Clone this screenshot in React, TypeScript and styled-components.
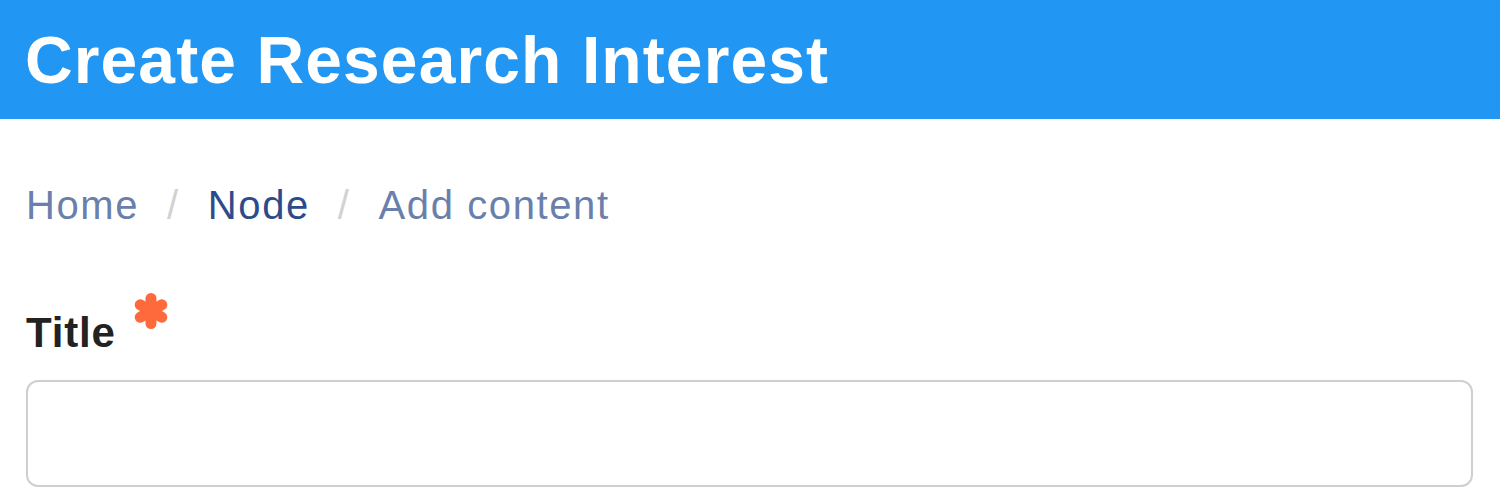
import React from 'react';
import styled, { createGlobalStyle } from 'styled-components';

const GlobalStyle = createGlobalStyle`
  html, body {
    margin: 0;
    padding: 0;
    background: #ffffff;
    font-family: 'Liberation Sans', Arial, sans-serif;
  }
`;

const Page = styled.div`
  width: 1500px;
  height: 500px;
  overflow: hidden;
  background: #fff;
`;

const Header = styled.header`
  height: 119px;
  background: #2196f3;
  display: flex;
  align-items: center;
  padding: 0 25px;
  box-sizing: border-box;
`;

const PageTitle = styled.h1`
  margin: 0;
  color: #fff;
  font-size: 66px;
  font-weight: 700;
  letter-spacing: 1.1px;
`;

const Content = styled.main`
  padding: 60px 27px 0 26px;
`;

const Breadcrumb = styled.nav`
  display: flex;
  align-items: center;
  gap: 28px;
  font-size: 40px;
  letter-spacing: 1.6px;
  height: 52px;
`;

const Crumb = styled.span<{ $active?: boolean }>`
  color: ${({ $active }) => ($active ? '#2d4b8b' : '#6a7fab')};
`;

const Sep = styled.span`
  color: #d2d2d2;
`;

const Field = styled.div`
  margin-top: 78px;
`;

const Label = styled.label`
  display: flex;
  align-items: flex-start;
  font-size: 42px;
  font-weight: 700;
  letter-spacing: 0.8px;
  color: #222;
`;

const Required = styled.svg`
  width: 38px;
  height: 38px;
  margin-left: 16px;
  margin-top: -17px;
`;

const Input = styled.input`
  display: block;
  margin-top: 23px;
  width: 1447px;
  height: 107px;
  box-sizing: border-box;
  border: 2px solid #cfcfcf;
  border-radius: 12px;
  background: #fff;
  outline: none;
  font-size: 36px;
`;

const RequiredMark = () => (
  <Required viewBox="0 0 38 38" aria-label="required">
    <g stroke="#ff6a3c" strokeWidth="11" strokeLinecap="round">
      <line x1="19" y1="6.5" x2="19" y2="31.5" />
      <line x1="8.2" y1="12.75" x2="29.8" y2="25.25" />
      <line x1="8.2" y1="25.25" x2="29.8" y2="12.75" />
    </g>
  </Required>
);

export default function App() {
  return (
    <Page>
      <GlobalStyle />
      <Header>
        <PageTitle>Create Research Interest</PageTitle>
      </Header>
      <Content>
        <Breadcrumb>
          <Crumb>Home</Crumb>
          <Sep>/</Sep>
          <Crumb $active>Node</Crumb>
          <Sep>/</Sep>
          <Crumb>Add content</Crumb>
        </Breadcrumb>
        <Field>
          <Label>
            Title
            <RequiredMark />
          </Label>
          <Input type="text" />
        </Field>
      </Content>
    </Page>
  );
}
